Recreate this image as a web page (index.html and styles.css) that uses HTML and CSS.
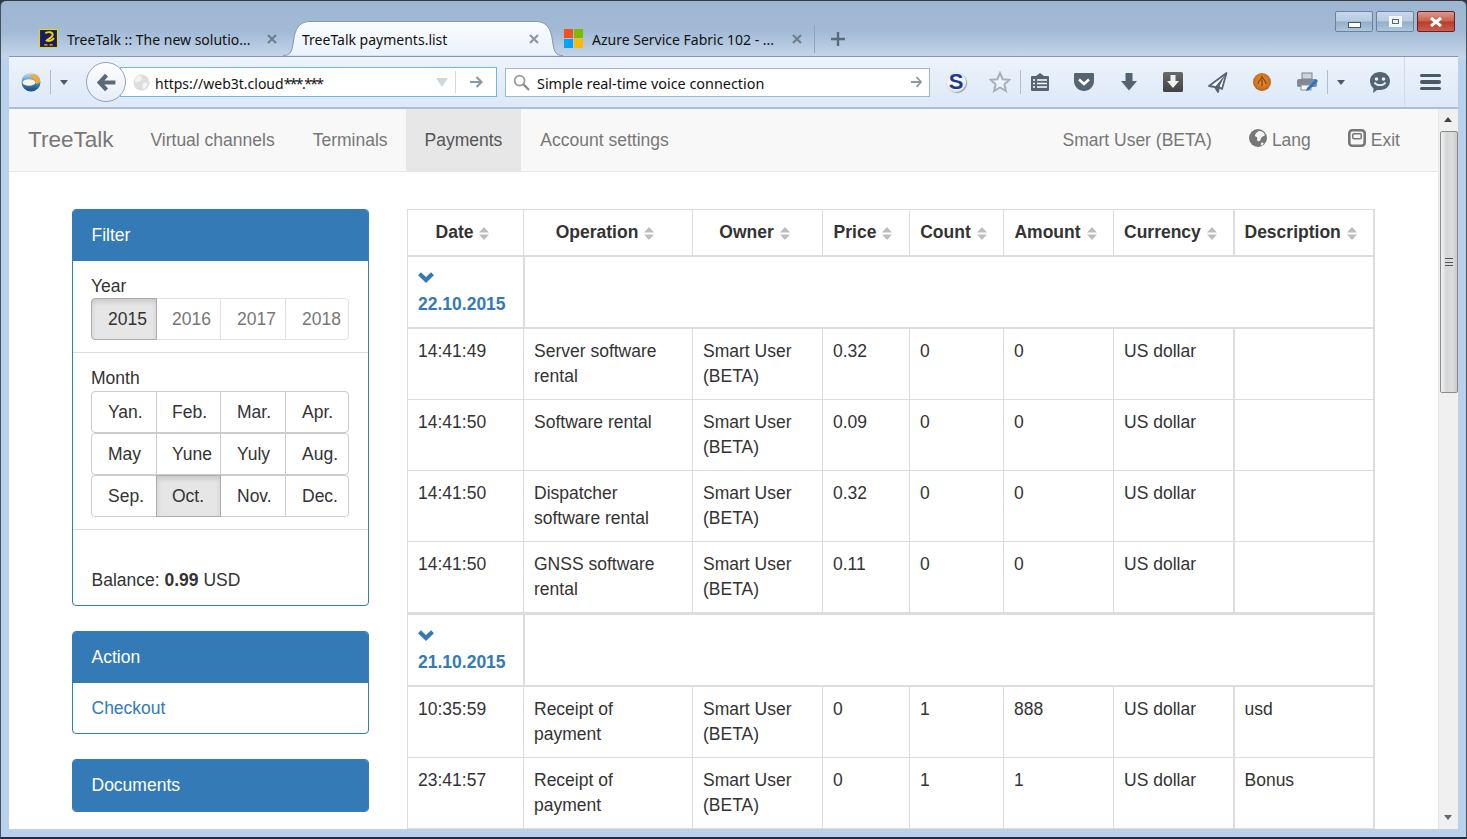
FILE: index.html
```html
<!DOCTYPE html>
<html lang="en">
<head>
<meta charset="utf-8">
<title>TreeTalk payments.list</title>
<link rel="stylesheet" href="styles.css">
</head>
<body>
<svg class="defs" width="0" height="0" aria-hidden="true">
  <defs>
    <g id="sort"><path d="M5 0 L10 5.5 H0Z M0 7.5 H10 L5 13Z" fill="#bdbdbd"/></g>
    <g id="chev"><path d="M1.5 1.8 L8 8 L14.5 1.8" fill="none" stroke="#337ab7" stroke-width="4.2"/></g>
    <linearGradient id="tabfill" x1="0" y1="0" x2="0" y2="1"><stop offset="0" stop-color="#fbfdff"/><stop offset="1" stop-color="#eaf2fb"/></linearGradient>
    <radialGradient id="orb" cx=".5" cy=".45" r=".6"><stop offset="0" stop-color="#e8963a"/><stop offset=".65" stop-color="#cf7420"/><stop offset="1" stop-color="#a9570f"/></radialGradient>
    <linearGradient id="fox" x1="0" y1="0" x2="0" y2="1"><stop offset="0" stop-color="#cfe8f7"/><stop offset=".5" stop-color="#3f8fc6"/><stop offset="1" stop-color="#184a78"/></linearGradient>
    <linearGradient id="boxfill" x1="0" y1="0" x2="0" y2="1"><stop offset="0" stop-color="#6a6a6a"/><stop offset="1" stop-color="#424242"/></linearGradient>
  </defs>
</svg>
<div class="window">
  <div class="titlebar">
    <div class="tab tab-first">
      <svg class="favicon" viewBox="0 0 18 18"><rect x=".5" y=".5" width="17" height="17" fill="#1c1a66" stroke="#e8d800"/><path d="M6 4c3-2 7-1 7 1.500S9 9 6.500 11.500M8 11.500c2 0 5-.5 6-3" fill="none" stroke="#f0d800" stroke-width="1.800"/><path d="M5 15h3M10 15h3" stroke="#f0d800" stroke-width="1.200"/></svg>
      <span class="tab-title">TreeTalk :: The new solutio...</span>
      <svg class="tab-x" viewBox="0 0 10 10"><path d="M1 1l8 8M9 1l-8 8" stroke="#6f7f90" stroke-width="2.2"/></svg>
    </div>
    <div class="tab tab-active">
      <svg class="tab-shape" viewBox="0 0 280 35" preserveAspectRatio="none"><path d="M0 34.5 C8 34.5 9 30 10.5 20 C12 8 16 .5 27 .5 L253 .5 C264 .5 268 8 269.500 20 C271 30 272 34.500 280 34.500" fill="url(#tabfill)" stroke="#7f97b3"/></svg>
      <span class="tab-title">TreeTalk payments.list</span>
      <svg class="tab-x" viewBox="0 0 10 10"><path d="M1 1l8 8M9 1l-8 8" stroke="#8b98a6" stroke-width="2.2"/></svg>
    </div>
    <div class="tab tab-last">
      <span class="mslogo"><i class="ms-r"></i><i class="ms-g"></i><i class="ms-b"></i><i class="ms-y"></i></span>
      <span class="tab-title">Azure Service Fabric 102 - ...</span>
      <svg class="tab-x" viewBox="0 0 10 10"><path d="M1 1l8 8M9 1l-8 8" stroke="#6f7f90" stroke-width="2.2"/></svg>
    </div>
    <span class="tab-sep"></span>
    <svg class="newtab" viewBox="0 0 14 14"><path d="M7 0v14M0 7h14" stroke="#5c6b7c" stroke-width="2.4"/></svg>
    <div class="winctl">
      <span class="wbtn"><i class="w-min"></i></span>
      <span class="wbtn"><i class="w-max"></i></span>
      <span class="wbtn wbtn-close"><svg viewBox="0 0 14 10" width="14" height="10"><path d="M2 1l10 8M12 1L2 9" stroke="#fff" stroke-width="3"/></svg></span>
    </div>
  </div>

  <div class="toolbar">
    <svg class="ffbtn" viewBox="0 0 22 22"><circle cx="11" cy="11" r="9.500" fill="url(#fox)"/><path d="M9 5c4-3 11-1 11 5 0 2-2 3-4 3 1-3-3-6-7-8z" fill="#f2a93b"/><ellipse cx="9" cy="11.500" rx="6.500" ry="3.300" fill="#fbf3df"/></svg>
    <span class="tsep tsep-a"></span>
    <span class="tri tri-a"></span>
    <span class="backbtn"><svg viewBox="0 0 20 20" width="21" height="21"><path d="M10 3 L3.500 10 L10 17 M4 10 H18.500" fill="none" stroke="#5a6878" stroke-width="4"/></svg></span>
    <div class="urlbar">
      <svg class="globe" viewBox="0 0 18 18"><circle cx="9" cy="9" r="8.500" fill="#dedede"/><path d="M6 2c3 0 4 2 3 4S5 7 4 9 2 6 2 6s2-4 4-4zM12 9c3 0 4 1 3 3s-3 4-4 4-1-3-1-4 1-3 2-3z" fill="#f4f4f4"/></svg>
      <span class="urltext">https://web3t.cloud<span class="stars">***.***</span></span>
      <span class="urltri"></span>
      <span class="urlsep"></span>
      <svg class="go" viewBox="0 0 14 12"><path d="M7.500 1 L12.500 6 L7.500 11 M12 6 H1" fill="none" stroke="#8b98a6" stroke-width="2.200"/></svg>
    </div>
    <div class="searchbar">
      <svg class="mag" viewBox="0 0 18 18"><circle cx="7" cy="7" r="5.300" fill="none" stroke="#9a9a9a" stroke-width="1.800"/><path d="M11 11l6 6" stroke="#8a8a8a" stroke-width="2.400"/></svg>
      <span class="searchtext">Simple real-time voice connection</span>
      <svg class="go go-s" viewBox="0 0 14 12"><path d="M7.500 1 L12 6 L7.500 11 M12 6 H2" fill="none" stroke="#8b98a6" stroke-width="1.800"/></svg>
    </div>
    <span class="tool tool-s"><span class="sbadge">S</span></span>
    <span class="tool tool-star"><svg viewBox="0 0 22 22" width="22" height="22"><path d="M11 2l2.700 6.200 6.800.6-5.100 4.500 1.500 6.700L11 16.500l-5.900 3.500 1.500-6.700L1.500 8.800l6.800-.6z" fill="#eef3f9" stroke="#a5b0bc" stroke-width="2"/></svg></span>
    <span class="tsep"></span>
    <span class="tool tool-clip"><svg viewBox="0 0 20 20" width="20" height="20"><path d="M2 4h4l4-3 4 3h4a1 1 0 0 1 1 1v13a1 1 0 0 1-1 1H2a1 1 0 0 1-1-1V5a1 1 0 0 1 1-1z" fill="#556473"/><path d="M3 8h2M3 11.500h2M3 15h2M7 8h10M7 11.500h10M7 15h10" stroke="#fff" stroke-width="1.500"/></svg></span>
    <span class="tool tool-pocket"><svg viewBox="0 0 22 20" width="22" height="20"><path d="M2 1h18a1 1 0 0 1 1 1v7c0 6-5 10-10 10S1 15 1 9V2a1 1 0 0 1 1-1z" fill="#556473"/><path d="M6 7.500l5 4.500 5-4.500" fill="none" stroke="#fff" stroke-width="2.600"/></svg></span>
    <span class="tool"><svg viewBox="0 0 18 20" width="18" height="20"><path d="M5.500 1h7v8H17L9 18.500 1 9h4.500z" fill="#556473"/></svg></span>
    <span class="tool"><svg viewBox="0 0 20 20" width="20" height="20"><rect width="20" height="20" rx="1.500" fill="url(#boxfill)"/><path d="M7.500 3h5v6H16l-6 7-6-7h3.500z" fill="#f2f2f2"/></svg></span>
    <span class="tool"><svg viewBox="0 0 20 22" width="20" height="22"><path d="M18.500 2L1 15l6 1 3 5 1-5 3 2z" fill="#fff" stroke="#556473" stroke-width="1.800" stroke-linejoin="round"/><path d="M18.500 2L7 16l3 5 1-5z" fill="#556473"/></svg></span>
    <span class="tool"><svg viewBox="0 0 20 20" width="20" height="20"><circle cx="10" cy="10" r="9" fill="url(#orb)"/><path d="M6 12c0-4 3-3 4-7 2 3 4 4 4 7M10 8v6" fill="none" stroke="#8c3f08" stroke-width="1.300"/></svg></span>
    <span class="tool"><svg viewBox="0 0 22 22" width="22" height="22"><rect x="6" y="2" width="10" height="6" fill="#cfd4da" stroke="#7a8592"/><rect x="1" y="8" width="20" height="8" rx="2" fill="#7f8a96"/><rect x="5" y="14" width="10" height="5" fill="#f4f6f8" stroke="#8a939d"/><path d="M10 20l1-3L20 8l2 2-9 9z" fill="#2a73c4"/></svg></span>
    <span class="tsep tsep-b"></span>
    <span class="tri tri-b"></span>
    <span class="tool tool-smile"><svg viewBox="0 0 22 22" width="22" height="22"><path d="M11 1c6 0 10 4 10 9s-4 9-10 9H8l-4 3 .500-4.500C2.500 16 1 13 1 10c0-5 4-9 10-9z" fill="#556473"/><circle cx="7.500" cy="8" r="1.800" fill="#e6eef7"/><circle cx="14.500" cy="8" r="1.800" fill="#e6eef7"/><path d="M5.500 11.500c2 3.500 9 3.500 11 0" fill="none" stroke="#e6eef7" stroke-width="1.800"/></svg></span>
    <span class="tsep tsep-c"></span>
    <span class="tool tool-menu"><span class="bars"><i></i><i></i><i></i></span></span>
  </div>

  <div class="viewport">
    <div class="page">
      <nav class="navbar">
        <a class="brand">TreeTalk</a>
        <a class="navlink">Virtual channels</a>
        <a class="navlink">Terminals</a>
        <a class="navlink navlink-active">Payments</a>
        <a class="navlink">Account settings</a>
        <span class="navspace"></span>
        <a class="navlink navlink-tight">Smart User (BETA)</a>
        <a class="navlink navicon navlink-tight"><svg viewBox="0 0 18 18" width="18" height="18"><circle cx="9" cy="9" r="9" fill="#777"/><path d="M10 2c2-.5 5 1 6 4-1 1.500-2.500 1-3.500 2.500s-.5 2.500-2 3.500-2.500-.5-2.500-1.500 1-2-.5-2.500-2-1.500-1-3 2-2.500 3.500-3z" fill="#f3f3f3"/><path d="M13 13.500c1 0 2 .5 1.500 1.500s-2 1.500-2.500 1 0-2.500 1-2.500z" fill="#f3f3f3"/></svg>Lang</a>
        <a class="navlink navicon"><svg viewBox="0 0 18 18" width="18" height="18"><rect x="1.300" y="1.300" width="15.400" height="15.400" rx="3" fill="none" stroke="#777" stroke-width="2.600"/><rect x="4.800" y="4.800" width="8.400" height="5" rx="1" fill="none" stroke="#777" stroke-width="1.500"/></svg>Exit</a>
      </nav>
      <div class="content">
        <aside class="sidebar">
          <section class="panel">
            <h3 class="panel-head">Filter</h3>
            <div class="filter-sec filter-top">
              <div class="label">Year</div>
              <div class="btn-row">
                <span class="btn btn-active">2015</span>
                <span class="btn btn-off">2016</span>
                <span class="btn btn-off">2017</span>
                <span class="btn btn-off">2018</span>
              </div>
            </div>
            <div class="filter-sec filter-mid">
              <div class="label">Month</div>
              <div class="btn-row"><span class="btn">Yan.</span><span class="btn">Feb.</span><span class="btn">Mar.</span><span class="btn">Apr.</span></div>
              <div class="btn-row"><span class="btn">May</span><span class="btn">Yune</span><span class="btn">Yuly</span><span class="btn">Aug.</span></div>
              <div class="btn-row"><span class="btn">Sep.</span><span class="btn btn-active">Oct.</span><span class="btn">Nov.</span><span class="btn">Dec.</span></div>
            </div>
            <div class="balance">Balance: <b>0.99</b> USD</div>
          </section>
          <section class="panel">
            <h3 class="panel-head">Action</h3>
            <div class="panel-body"><a class="link">Checkout</a></div>
          </section>
          <section class="panel">
            <h3 class="panel-head">Documents</h3>
          </section>
        </aside>
        <table class="grid">
          <colgroup><col class="c1"><col class="c2"><col class="c3"><col class="c4"><col class="c5"><col class="c6"><col class="c7"><col class="c8"></colgroup>
          <thead>
            <tr>
              <th>Date<svg class="sort" viewBox="0 0 10 13"><use href="#sort"/></svg></th>
              <th>Operation<svg class="sort" viewBox="0 0 10 13"><use href="#sort"/></svg></th>
              <th>Owner<svg class="sort" viewBox="0 0 10 13"><use href="#sort"/></svg></th>
              <th>Price<svg class="sort" viewBox="0 0 10 13"><use href="#sort"/></svg></th>
              <th>Count<svg class="sort" viewBox="0 0 10 13"><use href="#sort"/></svg></th>
              <th>Amount<svg class="sort" viewBox="0 0 10 13"><use href="#sort"/></svg></th>
              <th>Currency<svg class="sort" viewBox="0 0 10 13"><use href="#sort"/></svg></th>
              <th class="col-desc">Description<svg class="sort" viewBox="0 0 10 13"><use href="#sort"/></svg></th>
            </tr>
          </thead>
          <tbody>
            <tr class="group"><td><svg class="chev" viewBox="0 0 16 11"><use href="#chev"/></svg><a class="gdate">22.10.2015</a></td><td colspan="7" class="col-desc"></td></tr>
            <tr><td>14:41:49</td><td>Server software rental</td><td>Smart User (BETA)</td><td>0.32</td><td>0</td><td>0</td><td>US dollar</td><td class="col-desc"></td></tr>
            <tr><td>14:41:50</td><td>Software rental</td><td>Smart User (BETA)</td><td>0.09</td><td>0</td><td>0</td><td>US dollar</td><td class="col-desc"></td></tr>
            <tr><td>14:41:50</td><td>Dispatcher software rental</td><td>Smart User (BETA)</td><td>0.32</td><td>0</td><td>0</td><td>US dollar</td><td class="col-desc"></td></tr>
            <tr><td>14:41:50</td><td>GNSS software rental</td><td>Smart User (BETA)</td><td>0.11</td><td>0</td><td>0</td><td>US dollar</td><td class="col-desc"></td></tr>
          </tbody>
          <tbody>
            <tr class="group"><td><svg class="chev" viewBox="0 0 16 11"><use href="#chev"/></svg><a class="gdate">21.10.2015</a></td><td colspan="7" class="col-desc"></td></tr>
            <tr><td>10:35:59</td><td>Receipt of payment</td><td>Smart User (BETA)</td><td>0</td><td>1</td><td>888</td><td>US dollar</td><td class="col-desc">usd</td></tr>
            <tr><td>23:41:57</td><td>Receipt of payment</td><td>Smart User (BETA)</td><td>0</td><td>1</td><td>1</td><td>US dollar</td><td class="col-desc">Bonus</td></tr>
          </tbody>
        </table>
      </div>
    </div>
    <div class="scrollbar">
      <span class="sb-up"></span>
      <span class="sb-thumb"><span class="sb-grip"></span></span>
      <span class="sb-fill"></span>
      <span class="sb-down"></span>
    </div>
  </div>
</div>
</body>
</html>
```
FILE: styles.css
```css
* { box-sizing: border-box; }
html, body { margin: 0; padding: 0; height: 100%; overflow: hidden; }
body { font-family: "Liberation Sans", Arial, sans-serif; font-size: 17.5px; line-height: 25px; color: #333; background: #2b3a4a; }
.defs { position: absolute; }

.window {
  width: 1467px; height: 839px; display: flex; flex-direction: column;
  overflow: hidden;
  border-radius: 6px 6px 0 0;
  background: linear-gradient(to bottom, #9db6d2 0, #a2bad6 30px, #c4d6e9 56px, #b9d1ea 60px);
  border-left: 1px solid #43505e; border-right: 1px solid #43505e; border-top: 1px solid #3a3a3a; border-bottom: 2px solid #1f3040;
  padding: 1px 8px 8px 8px;
}

/* tab strip */
.titlebar { height: 54px; flex: none; display: flex; align-items: flex-end; position: relative; }
.tab { height: 35px; display: flex; align-items: center; position: relative; font-family: "Noto Sans", sans-serif; font-size: 14px; color: #111; flex: none; }
.tab-title { white-space: nowrap; position: relative; flex: 1; padding-top: 2px; }
.tab-x { width: 10px; height: 10px; flex: none; position: relative; }
.tab-first { width: 244px; margin-left: 30px; }
.tab-first .tab-x { margin-right: 6px; }
.favicon { width: 19px; height: 19px; margin-right: 9px; flex: none; }
.tab-active { width: 280px; padding-left: 19px; }
.tab-active .tab-x { margin-right: 24px; }
.tab-shape { position: absolute; left: 0; top: 0; width: 100%; height: 100%; }
.tab-last { width: 251px; padding-left: 1px; }
.tab-last .tab-x { margin-right: 12px; }
.mslogo { width: 19px; height: 19px; display: grid; grid-template-columns: 1fr 1fr; gap: 1px; margin-right: 9px; flex: none; }
.mslogo i { display: block; }
.ms-r { background: #f25022; } .ms-g { background: #7fba00; } .ms-b { background: #00a4ef; } .ms-y { background: #ffb900; }
.tab-sep { width: 1px; height: 28px; background: #8fa4bb; margin-bottom: 3px; flex: none; }
.newtab { width: 14px; height: 14px; margin: 0 0 10px 16px; flex: none; }
.winctl { margin-left: auto; margin-right: 3px; align-self: flex-start; margin-top: 9px; display: flex; gap: 3px; }
.wbtn { width: 38px; height: 21px; border: 1px solid #6c829c; border-radius: 2px; display: flex; align-items: center; justify-content: center; background: linear-gradient(to bottom, #c7d8ea 0, #b6cbe1 48%, #93adc9 52%, #aec6de 100%); }
.wbtn-close { border-color: #6e1c1c; background: linear-gradient(to bottom, #d99a8e 0, #c9604d 48%, #b83c2a 52%, #c9604d 100%); }
.w-min { width: 13px; height: 6px; margin-top: 7px; background: #fff; border: 1px solid #44566b; display: block; }
.w-max { width: 13px; height: 11px; background: #e9eff6; border: 3px solid #f4f7fa; outline: 1px solid #55677c; outline-offset: -4px; display: block; }

/* toolbar */
.toolbar { height: 53px; flex: none; display: flex; align-items: center; background: linear-gradient(to bottom, #ecf3fb, #dde9f7); border-top: 1px solid #7f97b3; border-bottom: 2px solid #a9c0d8; position: relative; }
.ffbtn { width: 22px; height: 22px; margin-left: 11px; flex: none; }
.tsep { width: 1px; height: 24px; background: #b0bdcb; flex: none; }
.tsep-a { margin-left: 8px; }
.tri { width: 0; height: 0; border-left: 4.500px solid transparent; border-right: 4.500px solid transparent; border-top: 5px solid #4b5865; flex: none; }
.tri-a { margin-left: 9px; }
.tri-b { margin-left: 9px; }
.backbtn { width: 40px; height: 40px; margin-left: 18px; margin-right: -6px; border-radius: 50%; background: linear-gradient(#fdfeff, #e6eef8); border: 1px solid #8fa3b9; display: flex; align-items: center; justify-content: center; position: relative; z-index: 1; flex: none; }
.urlbar { width: 377px; height: 30px; flex: none; display: flex; align-items: center; background: #fff; border: 1px solid #72b4e6; font-family: "Noto Sans", sans-serif; font-size: 14px; color: #111; padding-left: 12px; }
.globe { width: 17px; height: 17px; flex: none; margin-right: 5px; }
.urltext { flex: 1; white-space: nowrap; padding-top: 2px; }
.stars { letter-spacing: -1.600px; }
.urltri { width: 0; height: 0; border-left: 6px solid transparent; border-right: 6px solid transparent; border-top: 9px solid #cfd6dd; flex: none; margin-right: 7px; }
.urlsep { width: 1px; height: 22px; background: #d2d8de; flex: none; }
.go { width: 14px; height: 12px; margin: 0 13px 0 13px; flex: none; }
.searchbar { width: 425px; height: 29px; margin-left: 8px; flex: none; display: flex; align-items: center; background: #fff; border: 1px solid #a7b6c6; font-family: "Noto Sans", sans-serif; font-size: 14.400px; color: #111; padding-left: 7px; }
.mag { width: 17px; height: 17px; flex: none; margin-right: 7px; }
.searchtext { flex: 1; white-space: nowrap; padding-top: 2px; }
.go-s { margin: 0 6px 0 6px; }
.tool { width: 44.500px; display: flex; align-items: center; justify-content: center; flex: none; }
.tool-s { margin-left: 3.750px; }
.sbadge { width: 20px; height: 20px; border-radius: 50%; background: radial-gradient(circle, #fff 40%, #c5cdd6 100%); box-shadow: 1px 1px 1px #8f98a3; color: #1a3c8c; font-family: "Liberation Sans", sans-serif; font-weight: 700; font-size: 22px; line-height: 20px; text-align: center; }
.tool-star { width: 41px; margin-left: 1px; }
.tool-clip { width: 37.500px; }
.tool-pocket { margin-left: 3px; }
.tsep-b { margin-left: -2px; }
.tool-smile { margin-left: 13px; }
.tsep-c { margin-left: 1.500px; height: 100%; background: #cfdbe8; }
.tool-menu { width: 52px; }
.bars { display: flex; flex-direction: column; gap: 3px; width: 21px; }
.bars i { display: block; height: 3.500px; border-radius: 2px; background: #4b5865; }

/* viewport */
.viewport { flex: 1; min-height: 0; display: flex; background: #fff; overflow: hidden; }
.page { flex: 1; min-width: 0; overflow: hidden; }
.navbar { height: 63px; display: flex; align-items: stretch; background: #f8f8f8; border-bottom: 1px solid #e7e7e7; padding: 0 19px; color: #777; }
.brand { font-size: 22.500px; line-height: 62px; margin-right: 18px; color: #777; }
.navlink { padding: 0 19px; line-height: 62px; color: #777; display: flex; align-items: center; gap: 5px; }
.navlink-active { background: #e7e7e7; color: #555; margin-left: -1px; }
.navlink-tight { padding-right: 18px; }
.navspace { flex: 1; }
.navicon svg { flex: none; margin-top: -4px; }

.content { display: flex; align-items: flex-start; gap: 38px; padding: 37px 0 0 63px; }
.sidebar { width: 297px; flex: none; display: flex; flex-direction: column; gap: 25px; }
.panel { border: 1px solid #337ab7; border-radius: 4px; overflow: hidden; }
.panel-head { margin: 0; height: 51px; padding: 0 19px 0 18.500px; background: #337ab7; color: #fff; font-size: 17.500px; font-weight: 400; line-height: 51px; }
.panel-body { padding: 13px 18.500px 12px; }
.link { color: #337ab7; }
.filter-sec { padding: 13px 18px 12px; }
.filter-top .label { height: 24px; }
.filter-mid { border-top: 1px solid #ddd; border-bottom: 1px solid #ddd; }
.label { line-height: 25px; height: 25px; }
.btn-row { display: grid; grid-template-columns: 66px 64px 65px 63px; height: 42px; }
.btn { border: 1px solid #ccc; padding: 8px 0 0 16px; margin-left: -1px; background: #fff; color: #333; white-space: nowrap; line-height: 25px; }
.btn:first-child { margin-left: 0; border-radius: 4px 0 0 4px; padding-left: 16px; }
.btn:nth-child(2) { padding-left: 15px; }
.btn:last-child { border-radius: 0 4px 4px 0; }
.btn-active { background: #e6e6e6; border-color: #adadad; box-shadow: inset 0 3px 5px rgba(0,0,0,.125); position: relative; }
.btn-off { border-color: #e2e2e2; color: #777; }
.balance { padding: 38px 18.500px 12px; }

/* table */
.grid { width: 966px; flex: none; table-layout: fixed; border-collapse: collapse; border: 1px solid #ddd; }
.c1 { width: 116px; } .c2 { width: 169px; } .c3 { width: 130px; } .c4 { width: 87px; }
.c5 { width: 94px; } .c6 { width: 110px; } .c7 { width: 120px; } .c8 { width: 140px; }
.grid th, .grid td { border: 1px solid #ddd; padding: 10px; vertical-align: top; text-align: left; font-weight: 400; }
.grid th { text-align: center; font-weight: 700; white-space: nowrap; border-bottom: 2px solid #ddd; }
.grid .col-desc { border-left-width: 2px; border-right-width: 2px; }
.grid .group td { border-bottom-width: 2px; }
.grid tbody + tbody .group td { border-top-width: 3px; }
.grid tbody tr:last-child td { border-bottom-width: 3px; }
.sort { width: 10px; height: 13px; margin-left: 6px; margin-right: 6px; vertical-align: -2px; }
.chev { display: block; width: 16px; height: 11px; margin: 5px 0 9px 0; }
.gdate { display: block; color: #337ab7; font-weight: 700; white-space: nowrap; }

/* scrollbar */
.scrollbar { width: 20px; flex: none; display: flex; flex-direction: column; align-items: center; background: #f0f0f0; border-left: 1px solid #e6e6e6; }
.sb-up { height: 22px; width: 100%; flex: none; position: relative; }
.sb-up::after { content: ""; position: absolute; left: 5px; top: 8px; border-left: 4.500px solid transparent; border-right: 4.500px solid transparent; border-bottom: 5px solid #444; }
.sb-thumb { width: 18px; height: 262px; flex: none; border: 1px solid #8a8a8a; border-radius: 2px; background: linear-gradient(to right, #f2f2f2, #d4d5d6 35%, #dcdddf 70%, #c8c9ca); display: flex; align-items: center; justify-content: center; }
.sb-grip { width: 8px; height: 8px; border-top: 1px solid #555; border-bottom: 1px solid #555; background: linear-gradient(#555, #555) center / 100% 1px no-repeat; }
.sb-fill { flex: 1; }
.sb-down { height: 20px; width: 100%; flex: none; position: relative; }
.sb-down::after { content: ""; position: absolute; left: 5px; top: 6px; border-left: 4.500px solid transparent; border-right: 4.500px solid transparent; border-top: 5px solid #666; }
```
